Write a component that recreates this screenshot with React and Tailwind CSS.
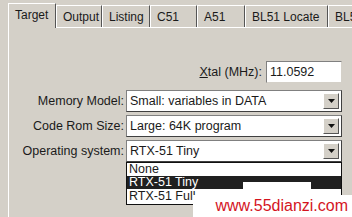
import React from 'react';

const tabs = [
  { label: 'Target', w: 'w-[48px]' },
  { label: 'Output', w: 'w-[46px]' },
  { label: 'Listing', w: 'w-[48px]' },
  { label: 'C51', w: 'w-[47px]' },
  { label: 'A51', w: 'w-[48px]' },
  { label: 'BL51 Locate', w: 'w-[83px]' },
  { label: 'BL51 Misc', w: 'w-[60px]' },
];

function Arrow() {
  return (
    <div className="ml-auto mr-[2px] w-[16px] h-[16px] bg-[#d4d0c8] border-t border-l border-white border-r border-b border-r-[#555] border-b-[#555] flex items-center justify-center">
      <svg width="7" height="4" viewBox="0 0 7 4">
        <polygon points="0,0 7,0 3.5,4" fill="#111" />
      </svg>
    </div>
  );
}

function Select({ value }) {
  return (
    <div className="w-[216px] h-[22px] bg-white border-t border-l border-[#808080] border-r border-b border-r-[#404040] border-b-[#404040] flex items-center">
      <span className="pl-[3px]">{value}</span>
      <Arrow />
    </div>
  );
}

function Row({ label, value }) {
  return (
    <div className="flex items-center">
      <div className="w-[117px] text-right pr-[2px]">{label}</div>
      <Select value={value} />
    </div>
  );
}

export default function App() {
  return (
    <div
      className="w-[352px] h-[217px] bg-[#d4d0c8] relative overflow-hidden text-[#1a1a1a]"
      style={{ fontFamily: '"Liberation Sans", Arial, sans-serif' }}
    >
      {/* tabs */}
      <div className="flex items-end h-[27px] pl-[8px] text-[12px]">
        {tabs.map((t, i) => (
          <div
            key={t.label}
            className={
              t.w +
              ' shrink-0 flex items-center pl-[6px] whitespace-nowrap overflow-hidden border-l border-t border-white border-r border-r-[#555] ' +
              (i === 0 ? 'h-[25px] bg-[#d4d0c8] -mb-px relative z-10 pb-[2px]' : 'h-[22px]')
            }
          >
            {t.label}
          </div>
        ))}
      </div>

      {/* panel */}
      <div className="ml-[8px] h-[190px] border-l border-t border-white text-[12.5px]">
        <div className="flex items-center justify-end pr-[10px] mt-[33px]">
          <span className="mr-[4px]">
            <span className="underline">X</span>tal (MHz):
          </span>
          <div className="w-[76px] h-[22px] bg-white border-t border-l border-[#808080] border-r border-b border-r-[#d4d0c8] border-b-[#d4d0c8] flex items-center pl-[3px]">
            11.0592
          </div>
        </div>

        <div className="mt-[7px] flex flex-col gap-[3px]">
          <Row label="Memory Model:" value="Small: variables in DATA" />
          <Row label="Code Rom Size:" value="Large: 64K program" />
          <Row label="Operating system:" value="RTX-51 Tiny" />
        </div>

        <div className="flex">
          <div className="w-[117px]" />
          <div className="w-[216px] bg-white border border-[#111] flex flex-col">
            <div className="h-[13px] leading-[13px] pl-[2px]">None</div>
            <div className="h-[13px] leading-[13px] pl-[2px] bg-[#202020] text-white">RTX-51 Tiny</div>
            <div className="h-[15px] leading-[15px] pl-[2px]">RTX-51 Full</div>
          </div>
        </div>
      </div>

      {/* watermark */}
      <div className="absolute left-[243px] top-[182px] w-[68px] h-[14px] bg-white" />
      <div className="absolute left-[193px] top-[195px] w-[159px] h-[22px] bg-white flex items-center justify-end pr-[4px]">
        <span className="text-[16px] text-[#d4141e] leading-none">www.55dianzi.com</span>
      </div>
    </div>
  );
}
